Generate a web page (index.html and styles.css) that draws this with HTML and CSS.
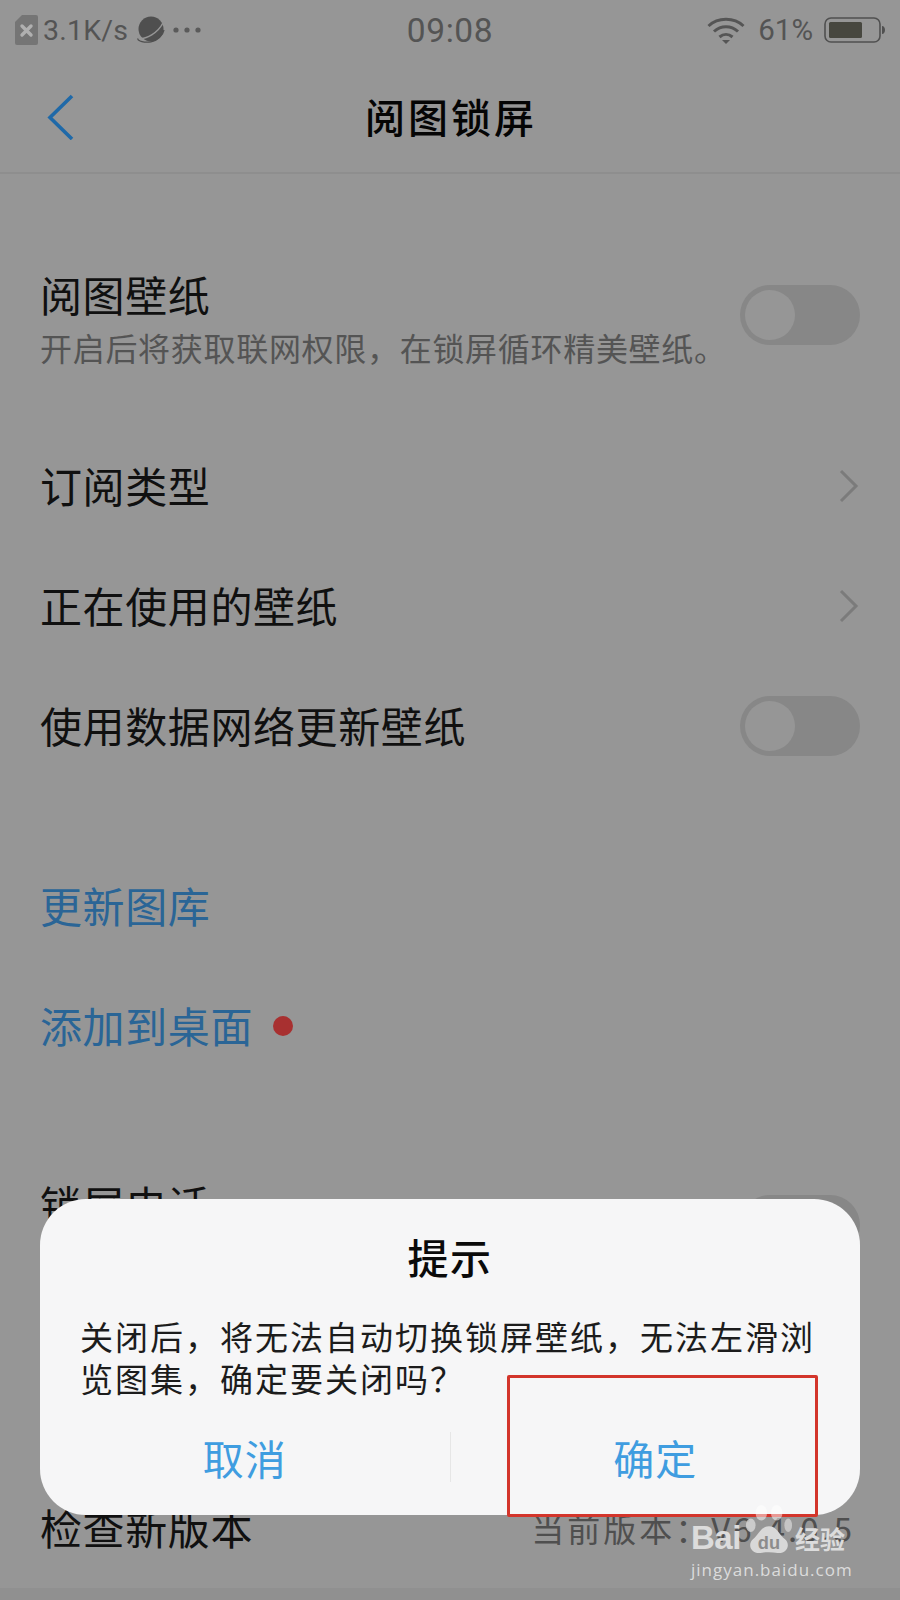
FILE: index.html
```html
<!DOCTYPE html>
<html lang="zh-CN">
<head>
<meta charset="utf-8">
<title>阅图锁屏</title>
<link rel="stylesheet" href="styles.css">
</head>
<body>
<div class="page">
  <div class="status">
    <div class="status-left">
      <svg class="sim" viewBox="0 0 23 30"><path d="M7 0H21a2 2 0 0 1 2 2V28a2 2 0 0 1-2 2H2a2 2 0 0 1-2-2V7z" fill="#757575"/><path d="M7 11l9 9M16 11l-9 9" stroke="#b0b0b0" stroke-width="3.4" stroke-linecap="round"/></svg>
      <span class="speed">3.1K/s</span>
      <svg class="planet" viewBox="0 0 28 28"><circle cx="14" cy="13" r="12.5" fill="#4f4f4f"/><path d="M1 22C9 24 21 17 26.500 6" fill="none" stroke="#969696" stroke-width="1.500"/><path d="M1 22.500C0 25 8 27 14 25.800C20 25 26 19 27 14" fill="none" stroke="#4f4f4f" stroke-width="1.300"/></svg>
      <svg class="dots" viewBox="0 0 28 6"><circle cx="3" cy="3" r="2.6" fill="#5a5a5a"/><circle cx="14" cy="3" r="2.6" fill="#5a5a5a"/><circle cx="25" cy="3" r="2.6" fill="#5a5a5a"/></svg>
    </div>
    <div class="time">09:08</div>
    <div class="status-right">
      <svg class="wifi" viewBox="0 0 38 27"><path d="M1.500 9C11 0 27 0 36.500 9" fill="none" stroke="#555" stroke-width="3"/><path d="M7 14.500C14 8 24 8 31 14.500" fill="none" stroke="#555" stroke-width="3"/><path d="M12.500 20C16.500 16.500 21.500 16.500 25.500 20" fill="none" stroke="#555" stroke-width="3"/><path d="M15 23H23L19 27z" fill="#555"/></svg>
      <span class="pct">61%</span>
      <svg class="battery" viewBox="0 0 61 26"><rect x="1" y="1" width="55" height="24" rx="6" fill="none" stroke="#505050" stroke-width="1.600"/><rect x="5" y="5" width="33" height="16" rx="1.500" fill="#47473f"/><path d="M58 9c2 0 3 2 3 4s-1 4-3 4z" fill="#505050"/></svg>
    </div>
  </div>
  <header class="nav">
    <svg class="back" viewBox="0 0 27 46"><path d="M25 2L3 23.500L25 45" fill="none" stroke="#1f69a8" stroke-width="3.600"/></svg>
    <h1 class="nav-title">阅图锁屏</h1>
  </header>

  <section class="group group-first">
    <div class="row row-tall">
      <div class="row-text">
        <div class="label">阅图壁纸</div>
        <div class="sub">开启后将获取联网权限，在锁屏循环精美壁纸。</div>
      </div>
      <div class="toggle"><span class="knob"></span></div>
    </div>
  </section>

  <section class="group group-types">
    <div class="row"><div class="label">订阅类型</div><svg class="chev" viewBox="0 0 20 34"><path d="M2 2L17 17L2 32" fill="none" stroke="#7b7b7b" stroke-width="3"/></svg></div>
    <div class="row"><div class="label">正在使用的壁纸</div><svg class="chev" viewBox="0 0 20 34"><path d="M2 2L17 17L2 32" fill="none" stroke="#7b7b7b" stroke-width="3"/></svg></div>
    <div class="row"><div class="label">使用数据网络更新壁纸</div><div class="toggle"><span class="knob"></span></div></div>
  </section>

  <section class="group group-links">
    <div class="row"><div class="label link">更新图库</div></div>
    <div class="row row-start"><div class="label link">添加到桌面</div><span class="red-dot"></span></div>
  </section>

  <section class="group group-lock">
    <div class="row row-tall">
      <div class="row-text">
        <div class="label">锁屏电话</div>
        <div class="sub-space"></div>
      </div>
      <div class="toggle"><span class="knob"></span></div>
    </div>
  </section>

  <section class="group group-update">
    <div class="row"><div class="label">检查新版本</div><div class="version">当前版本：V6.4.0.5</div></div>
  </section>
  <div class="bottom-strip"></div>

  <div class="dialog">
    <div class="dialog-title">提示</div>
    <p class="dialog-body">关闭后，将无法自动切换锁屏壁纸，无法左滑浏览图集，确定要关闭吗？</p>
    <div class="dialog-actions">
      <div class="dialog-btn">取消</div>
      <div class="dialog-sep"></div>
      <div class="dialog-btn">确定</div>
    </div>
  </div>
  <div class="annotation"></div>

  <div class="watermark">
    <div class="wm-top">
      <span class="wm-bai">Bai</span>
      <svg class="wm-paw" viewBox="0 0 50 52"><ellipse cx="6" cy="21" rx="5" ry="7" fill="#d8d8d8" fill-opacity=".8"/><ellipse cx="17" cy="8" rx="6" ry="8" fill="#fff" fill-opacity=".5"/><ellipse cx="33" cy="8" rx="6" ry="8" fill="#fff" fill-opacity=".5"/><ellipse cx="45" cy="21" rx="4" ry="7" fill="#d8d8d8" fill-opacity=".7"/><path d="M25 22C33 22 35 30 42 36C48 42 43 51 34 50C28 49 22 49 16 50C7 51 2 42 8 36C15 30 17 22 25 22Z" fill="#d8d8d8"/><text x="25" y="46" class="wm-du">du</text></svg>
      <span class="wm-jy">经验</span>
    </div>
    <div class="wm-url">jingyan.baidu.com</div>
  </div>
</div>
</body>
</html>
```
FILE: styles.css
```css
* { box-sizing: border-box; }
html, body { margin: 0; padding: 0; }
body {
  width: 900px;
  height: 1600px;
  overflow: hidden;
  background: #969696;
  font-family: "Noto Sans CJK SC", "Noto Sans", sans-serif;
}
.page {
  position: relative;
  width: 900px;
  height: 1600px;
  overflow: hidden;
  background: #969696;
  display: flex;
  flex-direction: column;
}
.status {
  position: relative;
  height: 60px;
  flex: none;
  display: flex;
  align-items: center;
  justify-content: space-between;
  padding: 0 15px;
  color: #545454;
  font-family: Roboto, "Liberation Sans", sans-serif;
}
.status-left, .status-right { display: flex; align-items: center; }
.sim { width: 23px; height: 30px; }
.speed { font-size: 28.500px; margin-left: 5px; letter-spacing: .2px; }
.planet { width: 28px; height: 28px; margin-left: 9px; }
.dots { width: 28px; height: 6px; margin-left: 8px; }
.time { position: absolute; left: 0; right: 0; text-align: center; font-size: 33.500px; letter-spacing: .6px; top: 11px; }
.wifi { width: 38px; height: 27px; }
.pct { font-size: 29.500px; margin-left: 13px; }
.battery { width: 61px; height: 26px; margin-left: 11px; }
.nav {
  position: relative;
  height: 114px;
  flex: none;
  display: flex;
  align-items: center;
  justify-content: center;
  border-bottom: 2px solid #8e8e8e;
}
.back { position: absolute; left: 47px; top: 34px; width: 27px; height: 46px; }
.nav-title { margin: 0; padding-left: 2px; font-size: 40px; font-weight: 500; color: #050505; letter-spacing: 3px; }
.group { flex: none; padding: 0 40px; }
.group-first { margin-top: 81px; }
.group-types { margin-top: 51px; }
.group-links { margin-top: 60px; }
.group-lock { margin-top: 79px; }
.group-update { margin-top: 183px; }
.row {
  height: 120px;
  display: flex;
  align-items: center;
  justify-content: space-between;
}
.row-start { justify-content: flex-start; }
.label { font-size: 42px; letter-spacing: .6px; line-height: 56px; color: #101010; padding-bottom: 2px; box-sizing: content-box; }
.row-text { display: flex; flex-direction: column; margin-top: 11px; }
.row-text .label { line-height: 50px; padding-bottom: 3px; }
.sub { font-size: 32px; letter-spacing: .7px; color: #545454; line-height: 50px; white-space: nowrap; }
.sub-space { height: 50px; }
.link { color: #2a6596; }
.red-dot { width: 20px; height: 20px; border-radius: 50%; background: #a83030; margin-left: 20px; }
.toggle {
  width: 120px;
  height: 60px;
  border-radius: 30px;
  background: #878787;
  padding: 5px;
}
.knob { display: block; width: 50px; height: 50px; border-radius: 50%; background: #969696; }
.chev { width: 20px; height: 34px; margin-right: 1px; }
.version { font-size: 33px; letter-spacing: 3px; color: #4f4f4f; margin-right: 5px; white-space: nowrap; }
.bottom-strip { position: absolute; left: 0; right: 0; bottom: 0; height: 12px; background: #909090; }
.dialog {
  position: absolute;
  left: 40px;
  top: 1199px;
  width: 820px;
  height: 316px;
  border-radius: 46px;
  background: #f6f6f7;
  display: flex;
  flex-direction: column;
}
.dialog-title { text-align: center; font-size: 41px; font-weight: 500; color: #0a0a0a; line-height: 56px; margin-top: 29px; letter-spacing: 1.500px; }
.dialog-body { margin: 31px 0 0; padding: 0 36px 0 40px; font-size: 33px; letter-spacing: 2px; line-height: 42px; color: #1c1c1c; height: 84px; }
.dialog-actions { display: flex; align-items: center; margin-top: 13px; flex: 1; padding-bottom: 13px; }
.dialog-btn { flex: 1; text-align: center; font-size: 41px; letter-spacing: 1px; color: #3f9de0; line-height: 56px; }
.dialog-sep { width: 1px; height: 50px; background: #e6e6e6; }
.annotation {
  position: absolute;
  left: 507px;
  top: 1375px;
  width: 311px;
  height: 142px;
  border: 3px solid #d3352b;
  border-radius: 2px;
}
.watermark { position: absolute; left: 691px; top: 1503px; width: 164px; color: #dcdcdc; }
.wm-top { display: flex; align-items: flex-end; height: 52px; }
.wm-bai { font-family: "Liberation Sans", sans-serif; font-weight: 700; font-size: 33px; line-height: 34px; letter-spacing: -.5px; flex: none; width: 54px; }
.wm-paw { width: 48px; height: 50px; flex: none; }
.wm-du { font-family: "Liberation Sans", sans-serif; font-size: 19px; font-weight: 700; fill: #8c8c8c; text-anchor: middle; }
.wm-jy { font-size: 25px; font-weight: 700; line-height: 34px; margin-left: 2px; white-space: nowrap; }
.wm-url { font-family: "Open Sans", "Liberation Sans", sans-serif; font-size: 17px; line-height: 24px; letter-spacing: 1px; margin-top: 3px; white-space: nowrap; }
```
